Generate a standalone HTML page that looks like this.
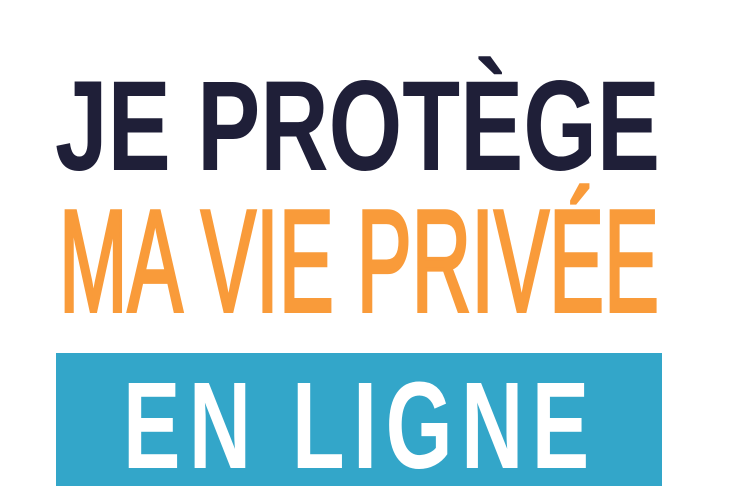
<!DOCTYPE html>
<html><head><meta charset="utf-8"><style>
html,body{margin:0;padding:0;background:#fff;width:741px;height:486px;overflow:hidden}
svg{display:block}
text{font-family:"Liberation Sans",sans-serif;font-weight:bold}
</style></head><body>
<svg width="741" height="486" viewBox="0 0 741 486" xmlns="http://www.w3.org/2000/svg">
<rect width="741" height="486" fill="#fff"/>
<text x="55" y="170" font-size="128" fill="#1f1f38" textLength="605" lengthAdjust="spacingAndGlyphs">JE PROTÈGE</text>
<text x="59" y="311" font-size="145" fill="#f99b3a" textLength="600" lengthAdjust="spacingAndGlyphs" style="font-weight:normal;stroke:#f99b3a;stroke-width:4">MA VIE PRIVÉE</text>
<rect x="56" y="353" width="606" height="133" fill="#33a6c9"/>
<g transform="scale(0.7,1)">
<text x="175.7" y="468" font-size="123" fill="#fff" textLength="666" lengthAdjust="spacing">EN LIGNE</text>
</g>
</svg>
</body></html>
